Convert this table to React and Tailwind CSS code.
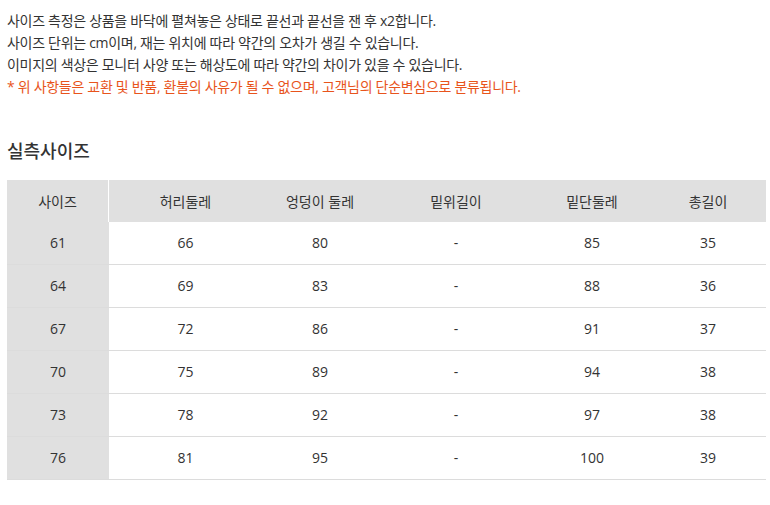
import React from "react";

const headers = ["사이즈", "허리둘레", "엉덩이 둘레", "밑위길이", "밑단둘레", "총길이"];

const rows = [
  ["61", "66", "80", "-", "85", "35"],
  ["64", "69", "83", "-", "88", "36"],
  ["67", "72", "86", "-", "91", "37"],
  ["70", "75", "89", "-", "94", "38"],
  ["73", "78", "92", "-", "97", "38"],
  ["76", "81", "95", "-", "100", "39"],
];

export default function App() {
  return (
    <div
      className="w-[770px] h-[505px] bg-white text-[#333] overflow-hidden"
      style={{ fontFamily: '"Open Sans", "Noto Sans CJK KR", sans-serif' }}
    >
      <div className="pl-[7px] pt-[10px] text-[14px] leading-[22px] tracking-[-0.3px]">
        <p>사이즈 측정은 상품을 바닥에 펼쳐놓은 상태로 끝선과 끝선을 잰 후 x2합니다.</p>
        <p>사이즈 단위는 cm이며, 재는 위치에 따라 약간의 오차가 생길 수 있습니다.</p>
        <p>이미지의 색상은 모니터 사양 또는 해상도에 따라 약간의 차이가 있을 수 있습니다.</p>
        <p className="text-[#e8541c]">* 위 사항들은 교환 및 반품, 환불의 사유가 될 수 없으며, 고객님의 단순변심으로 분류됩니다.</p>
      </div>

      <h2 className="pl-[7px] mt-[41px] text-[18px] leading-[24px] font-medium">실측사이즈</h2>

      <div className="ml-[7px] mt-[17px] w-[759px] text-[14px]">
        <div className="grid grid-cols-[102px_153px_116px_156px_116px_116px] h-[42px] bg-[#e0e0e0]">
          {headers.map((h, i) => (
            <div
              key={h}
              className={`flex items-center justify-center ${i === 0 ? "border-r border-white" : ""}`}
            >
              {h}
            </div>
          ))}
        </div>
        {rows.map((r) => (
          <div
            key={r[0]}
            className="grid grid-cols-[102px_153px_116px_156px_116px_116px] h-[43px] border-b border-[#dcdcdc]"
          >
            {r.map((c, i) => (
              <div
                key={i}
                className={`flex items-center justify-center pb-[2px] ${i === 0 ? "bg-[#e0e0e0]" : ""}`}
              >
                {c}
              </div>
            ))}
          </div>
        ))}
      </div>
    </div>
  );
}
